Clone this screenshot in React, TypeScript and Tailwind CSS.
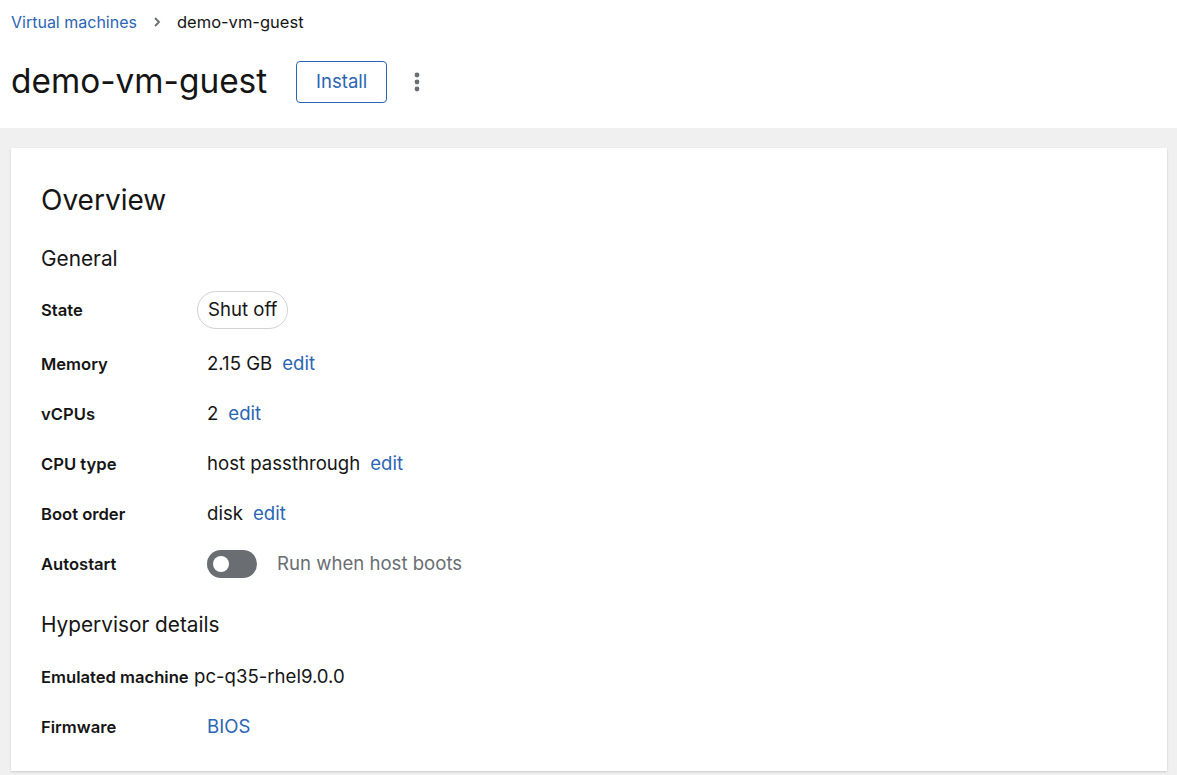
import React from "react";

const font = { fontFamily: "Inter, 'Noto Sans', sans-serif" };

function Row({ label, children, labelW = "w-[166px]", extra = "" }: { label: string; children: React.ReactNode; labelW?: string; extra?: string }) {
  return (
    <div className={`flex items-center h-[50px] ${extra}`}>
      <div className={`${labelW} shrink-0 text-[16.6px] font-semibold text-[#151515]`}>{label}</div>
      <div className="flex items-center text-[18.6px] text-[#151515]">{children}</div>
    </div>
  );
}

function Edit() {
  return <span className="ml-[10px] text-[18.6px] text-[#2b65b3]">edit</span>;
}

export default function App() {
  return (
    <div style={font} className="w-[1177px] h-[775px] bg-[#f0f0f0] overflow-hidden">
      <div className="bg-white px-[11px] pt-[10px] pb-[25px]">
        <div className="flex items-center h-[24px] text-[16px]">
          <span className="text-[#2b65b3]">Virtual machines</span>
          <svg className="ml-[15px] mr-[15px]" width="10" height="12" viewBox="0 0 10 12">
            <path d="M3 2 L7 6 L3 10" stroke="#6a6e73" strokeWidth="1.8" fill="none" />
          </svg>
          <span className="text-[16.5px] text-[#151515]">demo-vm-guest</span>
        </div>
        <div className="flex items-center h-[42px] mt-[27px]">
          <h1 className="text-[33.4px] text-[#151515] leading-none">demo-vm-guest</h1>
          <button className="ml-[29px] h-[42px] w-[91px] rounded-[4px] border border-[#2b65b3] text-[#2b65b3] text-[18.5px]">
            Install
          </button>
          <svg className="ml-[26px]" width="8" height="24" viewBox="0 0 8 24">
            <circle cx="4" cy="5" r="2.4" fill="#6a6e73" />
            <circle cx="4" cy="12" r="2.4" fill="#6a6e73" />
            <circle cx="4" cy="19" r="2.4" fill="#6a6e73" />
          </svg>
        </div>
      </div>
      <div className="ml-[11px] mr-[10px] mt-[20px] bg-white shadow-[0_1px_2px_rgba(0,0,0,0.16)] px-[30px] pt-[34px] pb-[19px]">
        <h2 className="text-[28px] leading-[36px] text-[#151515]">Overview</h2>
        <h3 className="mt-[26px] text-[20.8px] leading-[30px] text-[#151515]">General</h3>
        <div className="flex items-center h-[52px] mt-[10px]">
          <div className="w-[156px] shrink-0 text-[16.6px] font-semibold text-[#151515]">State</div>
          <span className="inline-flex items-center h-[38px] px-[10px] rounded-full border border-[#d2d2d2] text-[18.6px] text-[#151515]">
            Shut off
          </span>
        </div>
        <Row label="Memory" extra="mt-[3px]">
          2.15 GB<Edit />
        </Row>
        <Row label="vCPUs">
          2<Edit />
        </Row>
        <Row label="CPU type">
          host passthrough<Edit />
        </Row>
        <Row label="Boot order">
          disk<Edit />
        </Row>
        <Row label="Autostart">
          <span className="relative inline-block w-[50px] h-[28px] rounded-full bg-[#6a6e73]">
            <span className="absolute left-[6px] top-[6px] w-[16px] h-[16px] rounded-full bg-white" />
          </span>
          <span className="ml-[20px] text-[#6a6e73]">Run when host boots</span>
        </Row>
        <h3 className="mt-[21px] text-[20.8px] leading-[30px] text-[#151515]">Hypervisor details</h3>
        <Row label="Emulated machine" labelW="w-[153px]" extra="mt-[12px]">
          pc-q35-rhel9.0.0
        </Row>
        <Row label="Firmware" labelW="w-[153px]">
          <span className="ml-[13px] text-[#2b65b3]">BIOS</span>
        </Row>
      </div>
    </div>
  );
}
